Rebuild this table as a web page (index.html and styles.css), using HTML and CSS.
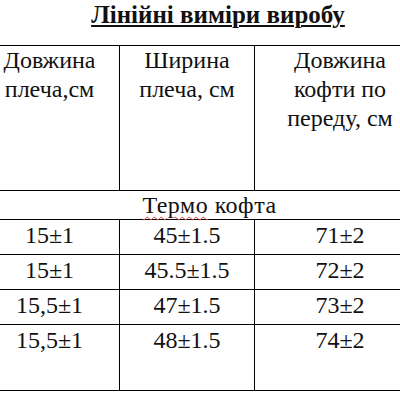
FILE: index.html
```html
<!DOCTYPE html>
<html lang="uk">
<head>
<meta charset="utf-8">
<link rel="stylesheet" href="styles.css">
</head>
<body>
<div class="page">
  <h1 class="title">Лінійні виміри виробу</h1>
  <table class="sizes">
    <colgroup>
      <col class="c1"><col class="c2"><col class="c3">
    </colgroup>
    <tr class="head">
      <td>Довжина<br>плеча,см</td>
      <td>Ширина<br>плеча, см</td>
      <td>Довжина<br>кофти по<br>переду, см</td>
    </tr>
    <tr class="group">
      <td colspan="3"><span class="spell">Термо</span> кофта</td>
    </tr>
    <tr class="row"><td>15±1</td><td>45±1.5</td><td>71±2</td></tr>
    <tr class="row"><td>15±1</td><td>45.5±1.5</td><td>72±2</td></tr>
    <tr class="row"><td>15,5±1</td><td>47±1.5</td><td>73±2</td></tr>
    <tr class="row last"><td>15,5±1</td><td>48±1.5</td><td>74±2</td></tr>
  </table>
</div>
</body>
</html>
```

FILE: styles.css
```css
html, body {
  margin: 0;
  padding: 0;
  background: #fff;
  overflow: hidden;
}
.page {
  width: 400px;
  height: 400px;
  overflow: hidden;
  font-family: "Liberation Serif", "Times New Roman", serif;
  color: #111;
}
.title {
  margin: 0;
  padding: 1px 0 0 36px;
  height: 45px;
  box-sizing: border-box;
  text-align: center;
  font-size: 25px;
  line-height: 28px;
  font-weight: bold;
  text-decoration: underline;
  text-decoration-thickness: 2px;
  text-underline-offset: 2px;
}
.sizes {
  margin-left: -21px;
  border-collapse: collapse;
  table-layout: fixed;
  width: 446px;
  font-size: 24px;
  line-height: 28px;
}
.c1 { width: 140px; }
.c2 { width: 135px; }
.c3 { width: 171px; }
.sizes td {
  border: 1px solid #000;
  text-align: center;
  vertical-align: top;
  padding: 1px 0 0 0;
}
.head td { height: 144px; line-height: 29px; padding-top: 0; }
.group td { height: 28px; padding: 0 0 0 14px; line-height: 28px; letter-spacing: 0.5px; }
.row td { height: 33px; }
.row.last td { height: 64px; }
.spell {
  text-decoration: underline wavy #d04040;
  text-decoration-thickness: 1px;
  text-underline-offset: 3px;
}
```
